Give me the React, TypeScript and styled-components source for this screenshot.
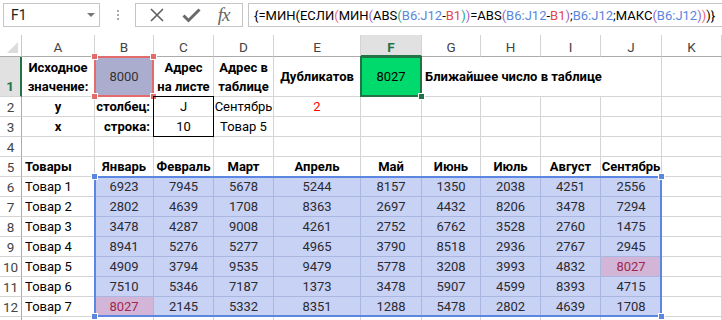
import React from "react";
import styled, { createGlobalStyle } from "styled-components";

const GlobalStyle = createGlobalStyle`
  html, body {
    margin: 0;
    padding: 0;
    background: #ffffff;
    overflow: hidden;
  }
  body {
    font-family: Roboto, "Noto Sans", sans-serif;
    color: #000;
  }
`;

const Window = styled.div`
  width: 722px;
  height: 320px;
  overflow: hidden;
  background: #fff;
`;

/* ---------- formula bar ---------- */

const FormulaBar = styled.div`
  display: flex;
  align-items: flex-start;
  height: 35px;
  padding: 3px 0 0 3px;
  box-sizing: border-box;
`;

const NameBox = styled.div`
  width: 97px;
  height: 24px;
  box-sizing: border-box;
  border: 1px solid #c6c6c6;
  display: flex;
  align-items: center;
  justify-content: space-between;
  padding: 0 4px 0 7px;
  font-size: 14px;
  color: #222;
`;

const DropArrow = styled.span`
  width: 0;
  height: 0;
  border-left: 4px solid transparent;
  border-right: 4px solid transparent;
  border-top: 4px solid #777;
`;

const Dots = styled.div`
  width: 35px;
  height: 24px;
  display: flex;
  flex-direction: column;
  align-items: center;
  justify-content: center;
  gap: 2px;
  span {
    width: 2px;
    height: 2px;
    background: #a8a8a8;
  }
`;

const ButtonBox = styled.div`
  width: 108px;
  height: 24px;
  box-sizing: border-box;
  border: 1px solid #c6c6c6;
  display: flex;
  align-items: center;
  justify-content: space-around;
  padding: 0 4px;
`;

const Fx = styled.span`
  font-family: "Liberation Serif", "DejaVu Serif", serif;
  font-style: italic;
  font-size: 19px;
  color: #666;
  letter-spacing: -1px;
`;

const FormulaInput = styled.div`
  flex: 1;
  height: 24px;
  margin-left: 5px;
  box-sizing: border-box;
  border: 1px solid #c6c6c6;
  border-right: none;
  display: flex;
  align-items: center;
  padding-left: 5px;
  font-size: 13px;
  white-space: nowrap;
  overflow: hidden;
`;

const Tok = styled.span<{ $c: string }>`
  color: ${(p) => p.$c};
`;

/* ---------- sheet ---------- */

const COLUMNS = "22px 73px 59px 60px 60px 87px 61px 59px 60px 60px 61px 1fr";
const ROWS = "22px 40px repeat(12, 20px)";

// the cell grid and the selection layer share one stacking cell
const SheetStack = styled.div`
  display: grid;
  & > * {
    grid-area: 1 / 1;
  }
`;

const Sheet = styled.div`
  display: grid;
  grid-template-columns: ${COLUMNS};
  grid-template-rows: ${ROWS};
  font-size: 13px;
`;

const SelectionLayer = styled.div`
  display: grid;
  grid-template-columns: ${COLUMNS};
  grid-template-rows: ${ROWS};
  pointer-events: none;
  z-index: 2;
`;

const Corner = styled.div`
  box-sizing: border-box;
  border-right: 1px solid #c8c8c8;
  border-bottom: 1px solid #ababab;
  display: flex;
  align-items: flex-end;
  justify-content: flex-end;
  padding: 0 3px 3px 0;
`;

const ColHead = styled.div<{ $active?: boolean }>`
  box-sizing: border-box;
  border-right: 1px solid #d4d4d4;
  border-bottom: ${(p) => (p.$active ? "2px solid #217346" : "1px solid #ababab")};
  background: ${(p) => (p.$active ? "#e1e1e1" : "#fff")};
  color: ${(p) => (p.$active ? "#217346" : "#444")};
  font-weight: ${(p) => (p.$active ? 700 : 400)};
  font-size: 13.5px;
  display: flex;
  align-items: center;
  justify-content: center;
  padding-top: ${(p) => (p.$active ? "4px" : "3px")};
`;

const RowHead = styled.div<{ $active?: boolean }>`
  box-sizing: border-box;
  border-right: ${(p) => (p.$active ? "2px solid #217346" : "1px solid #ababab")};
  border-bottom: 1px solid #d4d4d4;
  background: ${(p) => (p.$active ? "#e1e1e1" : "#fff")};
  color: ${(p) => (p.$active ? "#217346" : "#444")};
  font-weight: ${(p) => (p.$active ? 700 : 400)};
  font-size: 13.5px;
  display: flex;
  align-items: ${(p) => (p.$active ? "flex-end" : "center")};
  justify-content: center;
  padding-bottom: ${(p) => (p.$active ? "2px" : "0")};
`;

type CellProps = {
  $align?: "left" | "center" | "right";
  $bold?: boolean;
  $fill?: string;
  $line?: string;
  $color?: string;
  $span?: number;
};

const Cell = styled.div<CellProps>`
  box-sizing: border-box;
  grid-column: span ${(p) => p.$span ?? 1};
  border-right: 1px solid ${(p) => p.$line ?? "#d4d4d4"};
  border-bottom: 1px solid ${(p) => p.$line ?? "#d4d4d4"};
  background: ${(p) => p.$fill ?? "transparent"};
  color: ${(p) => p.$color ?? "#000"};
  font-weight: ${(p) => (p.$bold ? 700 : 400)};
  display: flex;
  align-items: center;
  justify-content: ${(p) =>
    p.$align === "left" ? "flex-start" : p.$align === "right" ? "flex-end" : "center"};
  text-align: ${(p) => p.$align ?? "center"};
  padding: 1px 3px 0;
  white-space: nowrap;
  line-height: 18px;
`;

const Wrapped = styled.div`
  white-space: normal;
  text-align: center;
  line-height: 19px;
`;

const Frame = styled.div<{ $col: string; $row: string; $c: string; $w: number }>`
  grid-column: ${(p) => p.$col};
  grid-row: ${(p) => p.$row};
  position: relative;
  margin: -1px 0 0 -1px;
  border: ${(p) => p.$w}px solid ${(p) => p.$c};
`;

const Handle = styled.span<{ $c: string; $pos: "tl" | "tr" | "bl" | "br"; $s?: number }>`
  position: absolute;
  width: ${(p) => p.$s ?? 6}px;
  height: ${(p) => p.$s ?? 6}px;
  background: ${(p) => p.$c};
  border: 1px solid #fff;
  box-sizing: content-box;
  ${(p) => (p.$pos[0] === "t" ? "top" : "bottom")}: -5px;
  ${(p) => (p.$pos[1] === "l" ? "left" : "right")}: -5px;
`;

/* ---------- data ---------- */

const K = "#000";
const PINK = "#ee5f7f";
const PURPLE = "#9b5fc8";
const GREEN = "#2ba57a";
const BLUE = "#5a86e0";
const RED = "#e0484e";

const formula: [string, string][] = [
  ["{=МИН(ЕСЛИ", K],
  ["(", PINK],
  ["МИН", K],
  ["(", PURPLE],
  ["ABS", K],
  ["(", GREEN],
  ["B6:J12", BLUE],
  ["-", K],
  ["B1", RED],
  [")", GREEN],
  [")", PURPLE],
  ["=ABS", K],
  ["(", PURPLE],
  ["B6:J12", BLUE],
  ["-", K],
  ["B1", RED],
  [")", PURPLE],
  [";", K],
  ["B6:J12", BLUE],
  [";МАКС", K],
  ["(", PURPLE],
  ["B6:J12", BLUE],
  [")", PURPLE],
  [")", PINK],
  [")}", K],
];

const letters = ["A", "B", "C", "D", "E", "F", "G", "H", "I", "J", "K"];
const months = ["Январь", "Февраль", "Март", "Апрель", "Май", "Июнь", "Июль", "Август", "Сентябрь"];
const data: number[][] = [
  [6923, 7945, 5678, 5244, 8157, 1350, 2038, 4251, 2556],
  [2802, 4639, 1708, 8363, 2697, 4432, 8206, 3478, 7294],
  [3478, 4287, 9008, 4261, 2752, 6762, 3528, 2760, 1475],
  [8941, 5276, 5277, 4965, 3790, 8518, 2936, 2767, 2945],
  [4909, 3794, 9535, 9479, 5778, 3208, 3993, 4832, 8027],
  [7510, 5346, 7187, 1373, 3478, 5907, 4599, 8393, 4715],
  [8027, 2145, 5332, 8351, 1288, 5478, 2802, 4639, 1708],
];
const hits = new Set(["4-8", "6-0"]);

const RANGE_FILL = "#c8d2f5";
const RANGE_LINE = "#a9b6e0";
const HIT_FILL = "#d3b5d8";
const SEL_RED = "#e46b6b";
const SEL_GREEN = "#217346";
const SEL_BLUE = "#5b87e3";

function Empty({ n }: { n: number }) {
  return (
    <>
      {Array.from({ length: n }, (_, i) => (
        <Cell key={i} />
      ))}
    </>
  );
}

export default function App() {
  return (
    <Window>
      <GlobalStyle />
      <FormulaBar>
        <NameBox>
          F1
          <DropArrow />
        </NameBox>
        <Dots>
          <span />
          <span />
          <span />
        </Dots>
        <ButtonBox>
          <svg width="16" height="16" viewBox="0 0 16 16">
            <path d="M2 2 L14 14 M14 2 L2 14" stroke="#5f5f5f" strokeWidth="1.6" fill="none" />
          </svg>
          <svg width="19" height="16" viewBox="0 0 19 16">
            <path d="M1.5 8.5 L6.5 13.5 L17.5 2.5" stroke="#6a6a6a" strokeWidth="3" fill="none" />
          </svg>
          <Fx>fx</Fx>
        </ButtonBox>
        <FormulaInput>
          {formula.map(([t, c], i) => (
            <Tok key={i} $c={c}>
              {t}
            </Tok>
          ))}
        </FormulaInput>
      </FormulaBar>

      <SheetStack>
        <Sheet>
          {/* column headers */}
          <Corner>
            <svg width="11" height="11" viewBox="0 0 11 11">
              <path d="M11 0 L11 11 L0 11 Z" fill="#dcdcdc" />
            </svg>
          </Corner>
          {letters.map((l) => (
            <ColHead key={l} $active={l === "F"}>
              {l}
            </ColHead>
          ))}

          {/* row 1 */}
          <RowHead $active>1</RowHead>
          <Cell $bold>
            <Wrapped>
              Исходное
              <br />
              значение:
            </Wrapped>
          </Cell>
          <Cell $fill="#abadcf" $color="#333">
            8000
          </Cell>
          <Cell $bold>
            <Wrapped>
              Адрес
              <br />
              на листе
            </Wrapped>
          </Cell>
          <Cell $bold>
            <Wrapped>
              Адрес в
              <br />
              таблице
            </Wrapped>
          </Cell>
          <Cell $bold>Дубликатов</Cell>
          <Cell $fill="#00d96b">8027</Cell>
          <Cell $bold $align="left" $span={4}>
            Ближайшее число в таблице
          </Cell>
          <Cell />

          {/* row 2 */}
          <RowHead>2</RowHead>
          <Cell $bold>y</Cell>
          <Cell $bold $align="right">
            столбец:
          </Cell>
          <Cell>J</Cell>
          <Cell>Сентябрь</Cell>
          <Cell $color="#ff0000">2</Cell>
          <Empty n={6} />

          {/* row 3 */}
          <RowHead>3</RowHead>
          <Cell $bold>x</Cell>
          <Cell $bold $align="right">
            строка:
          </Cell>
          <Cell>10</Cell>
          <Cell>Товар 5</Cell>
          <Empty n={7} />

          {/* row 4 */}
          <RowHead>4</RowHead>
          <Empty n={11} />

          {/* row 5 */}
          <RowHead>5</RowHead>
          <Cell $bold $align="left">
            Товары
          </Cell>
          {months.map((m) => (
            <Cell key={m} $bold>
              {m}
            </Cell>
          ))}
          <Cell />

          {/* rows 6-12 */}
          {data.map((row, r) => (
            <React.Fragment key={r}>
              <RowHead>{r + 6}</RowHead>
              <Cell $align="left">Товар {r + 1}</Cell>
              {row.map((v, c) => {
                const hit = hits.has(`${r}-${c}`);
                return (
                  <Cell
                    key={c}
                    $fill={hit ? HIT_FILL : RANGE_FILL}
                    $line={RANGE_LINE}
                    $color={hit ? "#a0284f" : "#2b2b33"}
                  >
                    {v}
                  </Cell>
                );
              })}
              <Cell />
            </React.Fragment>
          ))}

          {/* row 13, only its top edge is in view */}
          <RowHead />
          <Empty n={11} />
        </Sheet>

        <SelectionLayer>
          <Frame $col="3" $row="2" $c={SEL_RED} $w={2}>
            <Handle $c={SEL_RED} $pos="tl" $s={5} />
            <Handle $c={SEL_RED} $pos="tr" $s={5} />
            <Handle $c={SEL_RED} $pos="bl" $s={5} />
            <Handle $c={SEL_RED} $pos="br" $s={5} />
          </Frame>
          <Frame $col="4" $row="3 / 5" $c="#000" $w={1} />
          <Frame $col="7" $row="2" $c={SEL_GREEN} $w={2}>
            <Handle $c={SEL_GREEN} $pos="br" $s={5} />
          </Frame>
          <Frame $col="3 / 12" $row="7 / 14" $c={SEL_BLUE} $w={2}>
            <Handle $c={SEL_BLUE} $pos="tl" $s={5} />
            <Handle $c={SEL_BLUE} $pos="tr" $s={5} />
            <Handle $c={SEL_BLUE} $pos="bl" $s={5} />
            <Handle $c={SEL_BLUE} $pos="br" $s={5} />
          </Frame>
        </SelectionLayer>
      </SheetStack>
    </Window>
  );
}
